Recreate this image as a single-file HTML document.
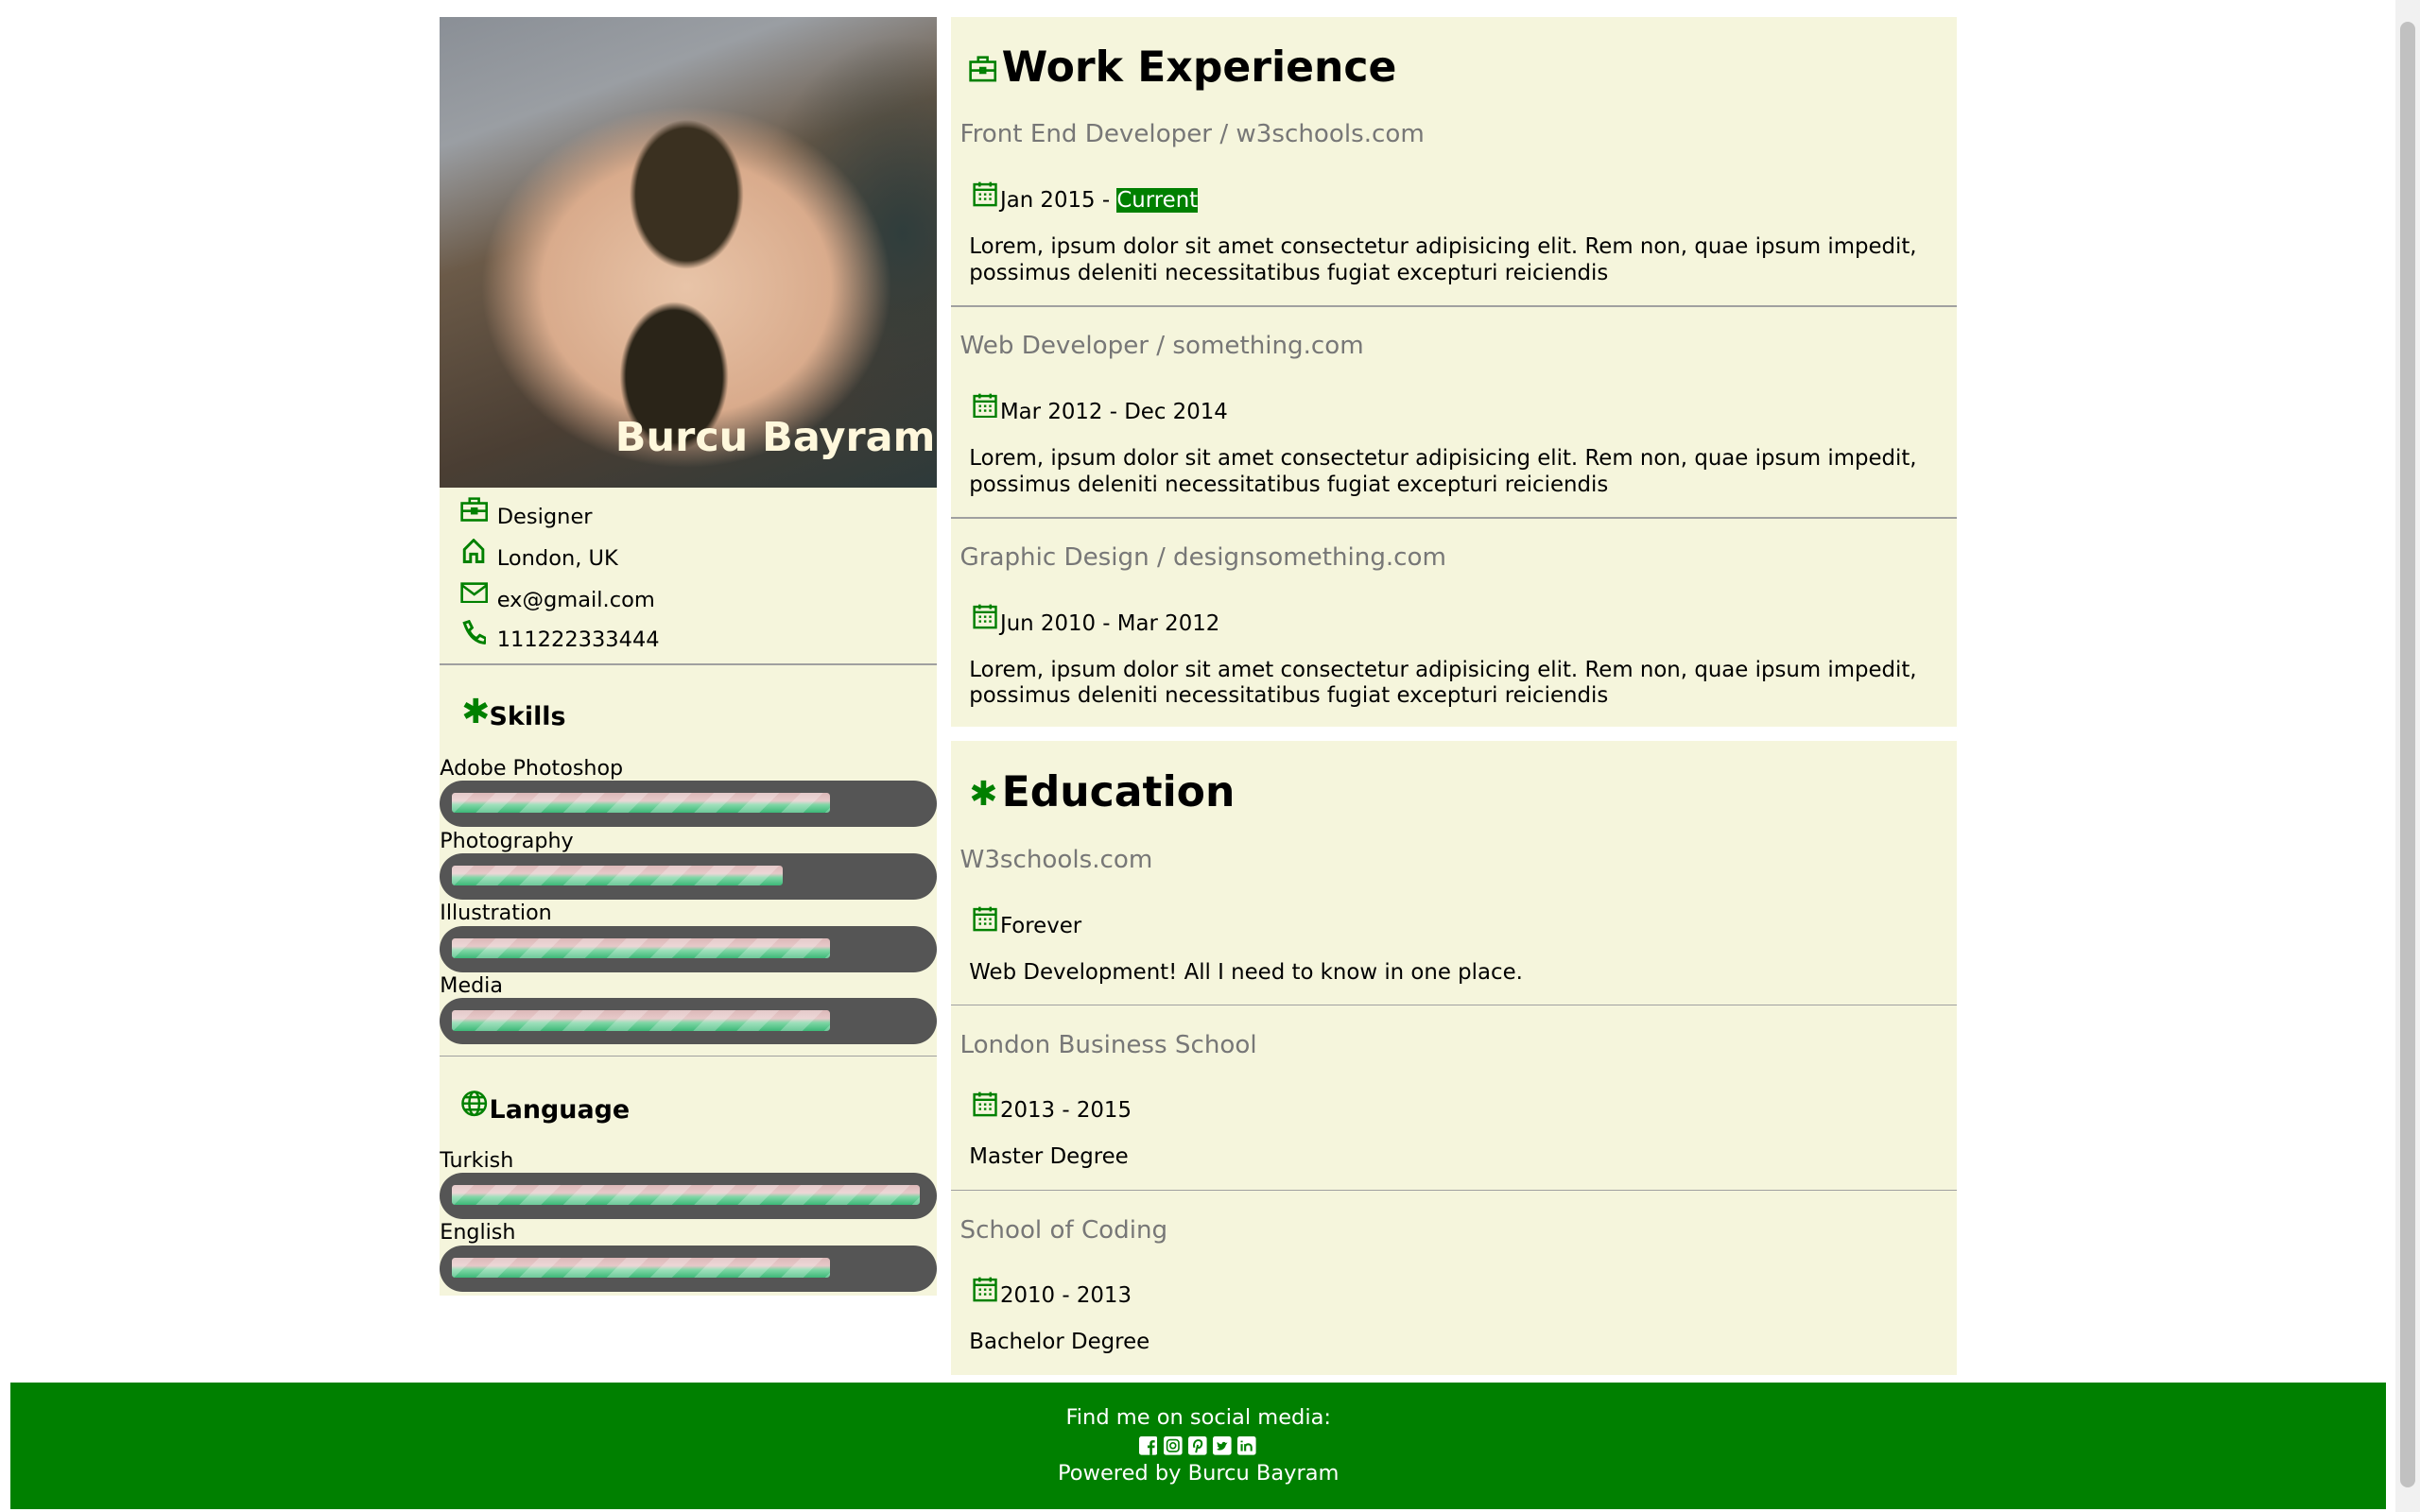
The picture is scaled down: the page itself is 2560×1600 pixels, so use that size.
<!DOCTYPE html>
<html><head><meta charset="utf-8"><style>
html,body{margin:0;padding:0;background:#fff;}
#w{position:relative;width:1568px;height:980px;zoom:1.632653;font-family:"DejaVu Sans","Liberation Sans",sans-serif;color:#000;overflow:hidden;}
.abs{position:absolute;}
.col{background:#f5f5dc;}
.photo{left:285px;top:11px;width:322px;height:305px;overflow:hidden;
background:
radial-gradient(ellipse 42px 55px at 160px 115px,#3a3020 0,#3a3020 78%,transparent 88%),
radial-gradient(ellipse 40px 55px at 152px 233px,#2a2418 0,#2a2418 78%,transparent 88%),
radial-gradient(ellipse 170px 150px at 160px 175px,#e8c4a8 0,#d9ab8c 55%,transparent 78%),
radial-gradient(ellipse 120px 160px at 300px 140px,#2f3d3c 0,transparent 80%),
linear-gradient(160deg,#8a8f96 0,#9a9ea3 20%,#6b5a48 40%,#4a3e33 70%,#2d3a3a 100%);}
.photo .name{position:absolute;right:1px;top:257px;color:#fff8dc;font-weight:bold;font-size:26.3px;white-space:nowrap;}
.info{font-size:13.8px;}
.ic{color:green;}
.hr{height:1px;background:#a0a0a0;}
.lbl{font-size:13.6px;left:285px;}
.bar{left:285px;width:322px;height:30px;border-radius:15px;background:#555;}
.fill{position:absolute;left:8px;top:8px;height:13px;border-radius:2px;
background:repeating-linear-gradient(135deg,rgba(255,255,255,.25) 0 10px,transparent 10px 20px),linear-gradient(180deg,#dcb8b8 0,#e6c9c9 40%,#7ed6a5 60%,#3cb878 100%);}
h2{margin:0;font-size:27px;font-weight:bold;}
.jt{font-size:16px;color:#777;left:622px;white-space:nowrap;}
.dt{font-size:14px;left:629px;white-space:nowrap;}
.p{font-size:14px;left:628px;width:640px;line-height:17px;}
svg{display:block;}
</style></head><body><div id="w">
<div class="abs col" style="left:285px;top:11px;width:322px;height:829px"></div>
<div class="abs photo"><div class="name">Burcu Bayram</div></div>

<svg class="abs" style="left:298px;top:322px" width="18" height="16" viewBox="0 0 18 16" fill="none" stroke="green" stroke-width="1.6"><rect x="1" y="4" width="16" height="11"/><path d="M6 4V1h6v3M1 9h16"/><rect x="7.5" y="7.5" width="3" height="3"/></svg>
<div class="abs info" style="left:322px;top:327px">Designer</div>
<svg class="abs" style="left:299px;top:349px" width="16" height="16" viewBox="0 0 16 16" fill="none" stroke="green" stroke-width="1.8"><path d="M2 15V7l6-6 6 6v8h-4v-5H6v5z"/></svg>
<div class="abs info" style="left:322px;top:354px">London, UK</div>
<svg class="abs" style="left:298px;top:377px" width="18" height="14" viewBox="0 0 18 14" fill="none" stroke="green" stroke-width="1.6"><rect x="1" y="1" width="16" height="12"/><path d="M1 2l8 6 8-6"/></svg>
<div class="abs info" style="left:322px;top:381px">ex@gmail.com</div>
<svg class="abs" style="left:299px;top:402px" width="16" height="16" viewBox="0 0 16 16" fill="none" stroke="green" stroke-width="1.8"><path d="M2 2l3-1 2 4-2 2q2 4 5 5l2-2 4 2-1 3Q6 14 2 2z"/></svg>
<div class="abs info" style="left:322px;top:407px">111222333444</div>
<div class="abs hr" style="left:285px;top:430px;width:322px"></div>

<div class="abs ic" style="left:299px;top:451px;font-size:22px;font-weight:bold;line-height:22px">✱</div>
<div class="abs" style="left:317px;top:455px;font-size:16.5px;font-weight:bold">Skills</div>
<div class="abs lbl" style="top:490px">Adobe Photoshop</div>
<div class="abs bar" style="top:506px"><div class="fill" style="width:245px"></div></div>
<div class="abs lbl" style="top:537px">Photography</div>
<div class="abs bar" style="top:553px"><div class="fill" style="width:214px"></div></div>
<div class="abs lbl" style="top:584px">Illustration</div>
<div class="abs bar" style="top:600px"><div class="fill" style="width:245px"></div></div>
<div class="abs lbl" style="top:631px">Media</div>
<div class="abs bar" style="top:647px"><div class="fill" style="width:245px"></div></div>
<div class="abs hr" style="left:285px;top:684px;width:322px"></div>

<svg class="abs" style="left:298px;top:706px" width="18" height="18" viewBox="0 0 18 18" fill="none" stroke="green" stroke-width="1.5"><circle cx="9" cy="9" r="7.5"/><ellipse cx="9" cy="9" rx="3.2" ry="7.5"/><path d="M1.5 9h15M3 5h12M3 13h12"/></svg>
<div class="abs" style="left:317px;top:710px;font-size:16.5px;font-weight:bold">Language</div>
<div class="abs lbl" style="top:744px">Turkish</div>
<div class="abs bar" style="top:760px"><div class="fill" style="width:303px"></div></div>
<div class="abs lbl" style="top:791px">English</div>
<div class="abs bar" style="top:807px"><div class="fill" style="width:245px"></div></div>

<div class="abs col" style="left:616px;top:11px;width:652px;height:460px"></div>
<svg class="abs" style="left:628px;top:36px" width="18" height="17" viewBox="0 0 18 17" fill="none" stroke="green" stroke-width="1.6"><rect x="1" y="4" width="16" height="12"/><path d="M6 4V1h6v3M1 9.5h16"/><rect x="7.5" y="8" width="3" height="3"/></svg>
<h2 class="abs" style="left:649px;top:28px">Work Experience</h2>
<div class="abs jt" style="top:78px">Front End Developer / w3schools.com</div>
<svg class="abs" style="left:630px;top:117px" width="16" height="17" viewBox="0 0 16 17" fill="none" stroke="green" stroke-width="1.5"><rect x="1" y="2.5" width="14" height="13.5"/><path d="M1 6h14M4.5 1v3M11.5 1v3" /><path d="M4 9h1.5M7.3 9h1.5M10.6 9h1.5M4 12h1.5M7.3 12h1.5M10.6 12h1.5"/></svg>
<div class="abs dt" style="left:648px;top:122px">Jan 2015 - <span style="background:green;color:#fff">Current</span></div>
<div class="abs p" style="top:152px">Lorem, ipsum dolor sit amet consectetur adipisicing elit. Rem non, quae ipsum impedit, possimus deleniti necessitatibus fugiat excepturi reiciendis</div>
<div class="abs hr" style="left:616px;top:198px;width:652px"></div>

<div class="abs jt" style="top:215px">Web Developer / something.com</div>
<svg class="abs" style="left:630px;top:254px" width="16" height="17" viewBox="0 0 16 17" fill="none" stroke="green" stroke-width="1.5"><rect x="1" y="2.5" width="14" height="13.5"/><path d="M1 6h14M4.5 1v3M11.5 1v3"/><path d="M4 9h1.5M7.3 9h1.5M10.6 9h1.5M4 12h1.5M7.3 12h1.5M10.6 12h1.5"/></svg>
<div class="abs dt" style="left:648px;top:259px">Mar 2012 - Dec 2014</div>
<div class="abs p" style="top:289px">Lorem, ipsum dolor sit amet consectetur adipisicing elit. Rem non, quae ipsum impedit, possimus deleniti necessitatibus fugiat excepturi reiciendis</div>
<div class="abs hr" style="left:616px;top:335px;width:652px"></div>

<div class="abs jt" style="top:352px">Graphic Design / designsomething.com</div>
<svg class="abs" style="left:630px;top:391px" width="16" height="17" viewBox="0 0 16 17" fill="none" stroke="green" stroke-width="1.5"><rect x="1" y="2.5" width="14" height="13.5"/><path d="M1 6h14M4.5 1v3M11.5 1v3"/><path d="M4 9h1.5M7.3 9h1.5M10.6 9h1.5M4 12h1.5M7.3 12h1.5M10.6 12h1.5"/></svg>
<div class="abs dt" style="left:648px;top:396px">Jun 2010 - Mar 2012</div>
<div class="abs p" style="top:426px">Lorem, ipsum dolor sit amet consectetur adipisicing elit. Rem non, quae ipsum impedit, possimus deleniti necessitatibus fugiat excepturi reiciendis</div>

<div class="abs col" style="left:616px;top:480px;width:652px;height:411px"></div>
<div class="abs ic" style="left:628px;top:504px;font-size:22px;font-weight:bold;line-height:22px">✱</div>
<h2 class="abs" style="left:649px;top:498px">Education</h2>
<div class="abs jt" style="top:548px">W3schools.com</div>
<svg class="abs" style="left:630px;top:587px" width="16" height="17" viewBox="0 0 16 17" fill="none" stroke="green" stroke-width="1.5"><rect x="1" y="2.5" width="14" height="13.5"/><path d="M1 6h14M4.5 1v3M11.5 1v3"/><path d="M4 9h1.5M7.3 9h1.5M10.6 9h1.5M4 12h1.5M7.3 12h1.5M10.6 12h1.5"/></svg>
<div class="abs dt" style="left:648px;top:592px">Forever</div>
<div class="abs p" style="top:622px">Web Development! All I need to know in one place.</div>
<div class="abs hr" style="left:616px;top:651px;width:652px"></div>

<div class="abs jt" style="top:668px">London Business School</div>
<svg class="abs" style="left:630px;top:707px" width="16" height="17" viewBox="0 0 16 17" fill="none" stroke="green" stroke-width="1.5"><rect x="1" y="2.5" width="14" height="13.5"/><path d="M1 6h14M4.5 1v3M11.5 1v3"/><path d="M4 9h1.5M7.3 9h1.5M10.6 9h1.5M4 12h1.5M7.3 12h1.5M10.6 12h1.5"/></svg>
<div class="abs dt" style="left:648px;top:712px">2013 - 2015</div>
<div class="abs p" style="top:742px">Master Degree</div>
<div class="abs hr" style="left:616px;top:771px;width:652px"></div>

<div class="abs jt" style="top:788px">School of Coding</div>
<svg class="abs" style="left:630px;top:827px" width="16" height="17" viewBox="0 0 16 17" fill="none" stroke="green" stroke-width="1.5"><rect x="1" y="2.5" width="14" height="13.5"/><path d="M1 6h14M4.5 1v3M11.5 1v3"/><path d="M4 9h1.5M7.3 9h1.5M10.6 9h1.5M4 12h1.5M7.3 12h1.5M10.6 12h1.5"/></svg>
<div class="abs dt" style="left:648px;top:832px">2010 - 2013</div>
<div class="abs p" style="top:862px">Bachelor Degree</div>

<div class="abs" style="left:7px;top:896px;width:1539px;height:82px;background:green;color:#fff;text-align:center;font-size:13.8px">
<div style="position:absolute;left:0;right:0;top:15px">Find me on social media:</div>
<div style="position:absolute;left:731px;top:35px;display:flex;gap:4px">
<svg width="12" height="12" viewBox="0 0 12 12"><rect width="12" height="12" rx="1.5" fill="#fff"/><path d="M8.5 12V7.5h1.5l.2-1.7H8.5V4.8c0-.5.2-.8.8-.8h.9V2.5H8.9C7.6 2.5 6.9 3.3 6.9 4.6v1.2H5.5v1.7h1.4V12z" fill="green"/></svg>
<svg width="12" height="12" viewBox="0 0 12 12"><rect width="12" height="12" rx="1.5" fill="#fff"/><rect x="2.2" y="2.2" width="7.6" height="7.6" rx="2" fill="none" stroke="green" stroke-width="1"/><circle cx="6" cy="6" r="1.8" fill="none" stroke="green" stroke-width="1"/></svg>
<svg width="12" height="12" viewBox="0 0 12 12"><rect width="12" height="12" rx="1.5" fill="#fff"/><path d="M5 10.5l1.2-5M4 7.2C3 5 4.5 2.5 6.5 2.5S9 4 8.6 5.5 7 7.8 5.8 7" fill="none" stroke="green" stroke-width="1.2"/></svg>
<svg width="12" height="12" viewBox="0 0 12 12"><rect width="12" height="12" rx="1.5" fill="#fff"/><path d="M2.5 8.5c2 1 5 .5 6-3l1-1.5-1.2.3c-.5-1-2.3-1-2.5.7C4.5 5 3.5 4.3 3 3.5c-.5 1 0 2 .7 2.5l-.7-.2c0 .8.6 1.3 1.3 1.5-.6.6-1.2.9-1.8 1.2z" fill="green"/></svg>
<svg width="12" height="12" viewBox="0 0 12 12"><rect width="12" height="12" rx="1.5" fill="#fff"/><path d="M2.8 5v4.5M2.8 2.8v1M5 5v4.5M5 7c0-2.5 4-2.5 4 0v2.5" fill="none" stroke="green" stroke-width="1.3"/></svg>
</div>
<div style="position:absolute;left:0;right:0;top:51px">Powered by Burcu Bayram</div>
</div>
<div class="abs" style="left:1552px;top:0;width:16px;height:980px;background:#f1f1f1"></div>
<div class="abs" style="left:1555px;top:14px;width:10px;height:950px;background:#c1c1c1;border-radius:5px"></div>
</div></body></html>
